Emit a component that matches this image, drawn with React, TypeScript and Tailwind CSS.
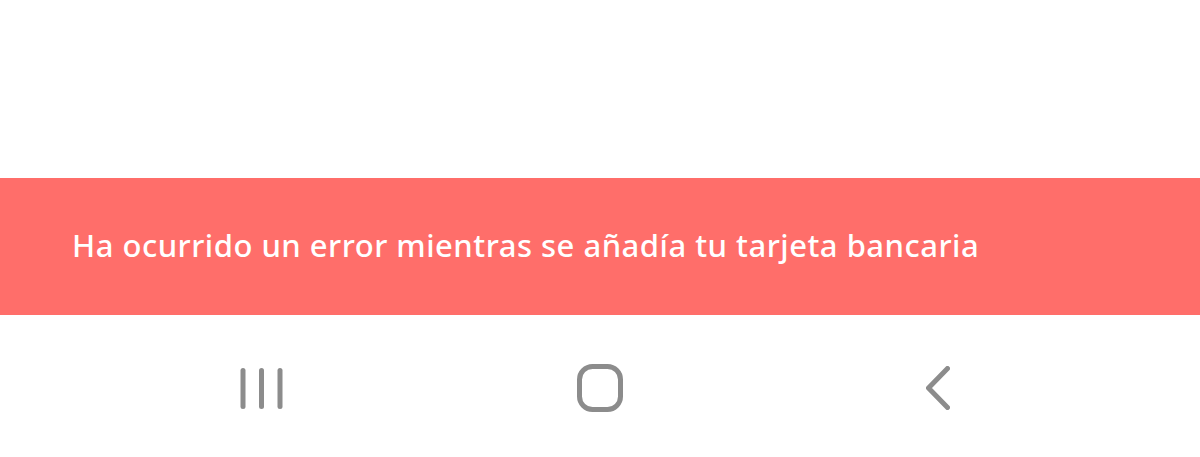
export default function App() {
  return (
    <div className="flex h-[457px] w-[1200px] flex-col bg-white">
      <div className="h-[178px] shrink-0 bg-white" />
      <div className="flex h-[137px] shrink-0 items-center bg-[#ff6e6a] px-[72px] pb-[2px]">
        <p
          className="text-[31px] font-medium leading-none tracking-[0.5px] text-white"
          style={{ fontFamily: "'Noto Sans', 'Open Sans', sans-serif" }}
        >
          Ha ocurrido un error mientras se añadía tu tarjeta bancaria
        </p>
      </div>
      <nav className="flex flex-1 items-center pl-[236px] pt-[4px]">
        <svg width="50" height="41" viewBox="0 0 50 41">
          <g stroke="#8c8c8c" strokeWidth="5" strokeLinecap="round">
            <line x1="7" y1="2.5" x2="7" y2="38.5" />
            <line x1="25.5" y1="2.5" x2="25.5" y2="38.5" />
            <line x1="44" y1="2.5" x2="44" y2="38.5" />
          </g>
        </svg>
        <svg width="46" height="48" viewBox="0 0 46 48" className="ml-[291px]">
          <rect x="2.5" y="2.5" width="41" height="43" rx="13" fill="none" stroke="#8c8c8c" strokeWidth="5" />
        </svg>
        <svg width="24" height="44" viewBox="0 0 24 44" className="ml-[303px]">
          <polyline
            points="21.5,2.5 2.5,22 21.5,41.5"
            fill="none"
            stroke="#8c8c8c"
            strokeWidth="5"
            strokeLinecap="round"
            strokeLinejoin="round"
          />
        </svg>
      </nav>
    </div>
  );
}
